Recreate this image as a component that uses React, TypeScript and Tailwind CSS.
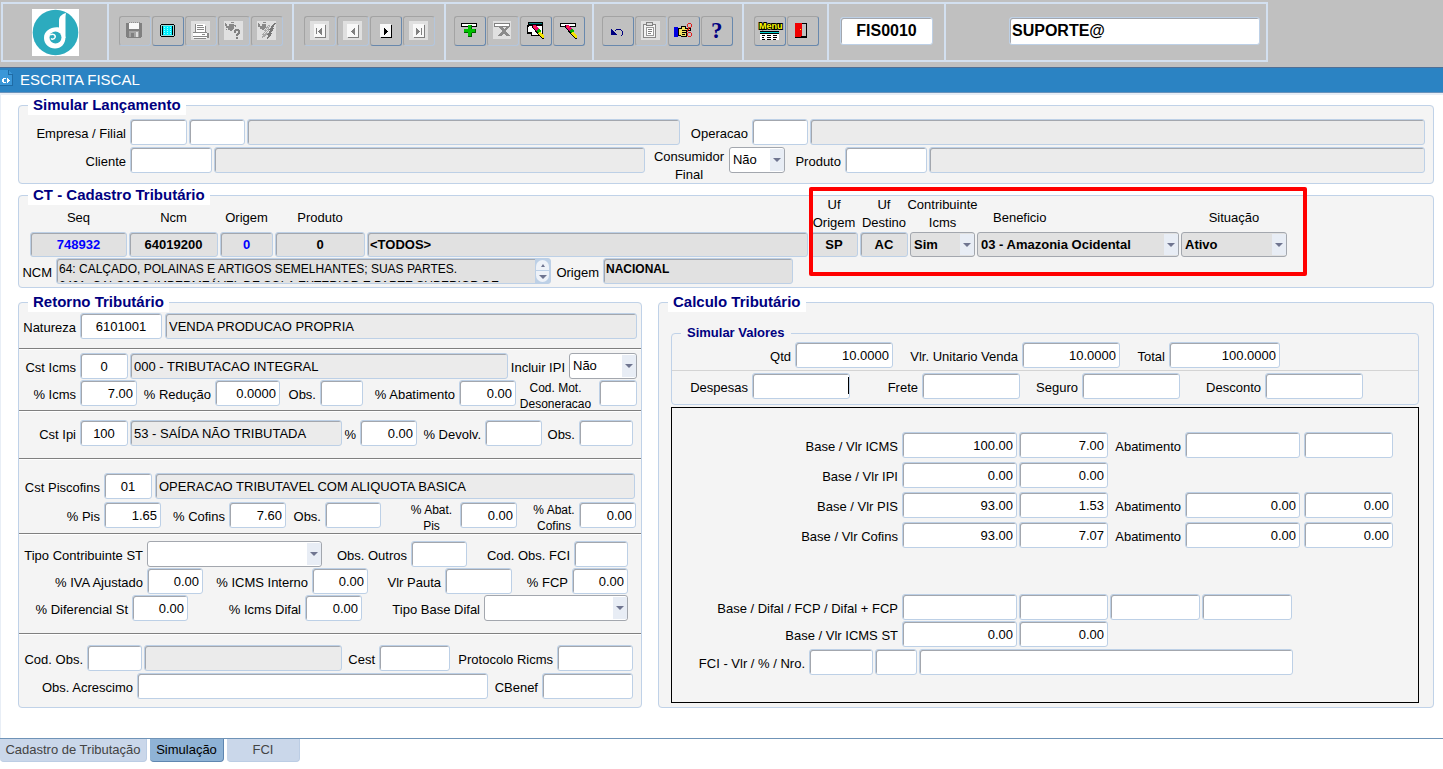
import { useId, useState } from "react";
import type { ReactNode } from "react";
import clsx from "clsx";

const BOX =
  "block h-[26px] rounded-[3px] border border-[#bdd0e6] px-[3px] text-[13px] text-black shadow-[inset_1px_1px_0_#a3a7ae] outline-none";

interface InputProps {
  className?: string;
  value?: string;
  readOnly?: boolean;
  id?: string;
  label?: string;
}

function Input({ className, value = "", readOnly, id, label }: InputProps) {
  return (
    <input
      id={id}
      type="text"
      aria-label={label}
      defaultValue={value}
      readOnly={readOnly}
      className={clsx(BOX, readOnly ? "min-w-0 bg-[#ebebeb]" : "shrink-0 bg-white", className)}
    />
  );
}

interface LabelProps {
  htmlFor: string;
  className: string;
  children: ReactNode;
}

function Label({ htmlFor, className, children }: LabelProps) {
  return (
    <label
      htmlFor={htmlFor}
      className={clsx("h-[26px] shrink-0 pt-[3px] pr-1 text-right leading-6 whitespace-nowrap", className)}
    >
      {children}
    </label>
  );
}

interface FieldProps {
  label: ReactNode;
  labelClass: string;
  className: string;
  value?: string;
}

// Rótulo + campo lado a lado
function Field({ label, labelClass, className, value }: FieldProps) {
  const id = useId();
  return (
    <>
      <Label htmlFor={id} className={labelClass}>
        {label}
      </Label>
      <Input id={id} className={className} value={value} />
    </>
  );
}

interface SelectBoxProps {
  id: string;
  className: string;
  options: string[];
  dark?: boolean;
}

function SelectBox({ id, className, options, dark }: SelectBoxProps) {
  return (
    <div className={clsx("relative self-start", className)}>
      <select
        id={id}
        className={clsx(
          "block w-full appearance-none rounded-[3px] border border-[#a3a7ae] pl-[3px] text-[13px] text-black outline-none",
          dark ? "h-[25px] bg-[#e1e1e1] font-bold" : "h-[26px] bg-white"
        )}
      >
        {options.map((o) => (
          <option key={o}>{o}</option>
        ))}
      </select>
      <span className="pointer-events-none absolute inset-y-[2px] right-px flex w-[14px] items-center justify-center bg-[#e8edf5]">
        <svg width="8" height="4" viewBox="0 0 8 4">
          <path d="M0 0h8L4 4z" fill="#6f7590" />
        </svg>
      </span>
    </div>
  );
}

function SelectField({
  label,
  labelClass,
  className,
  options,
}: {
  label: ReactNode;
  labelClass: string;
  className: string;
  options: string[];
}) {
  const id = useId();
  return (
    <>
      <Label htmlFor={id} className={labelClass}>
        {label}
      </Label>
      <SelectBox id={id} className={className} options={options} />
    </>
  );
}

function Panel({ title, className, children }: { title: string; className?: string; children: ReactNode }) {
  return (
    <fieldset className={clsx("relative min-w-0 rounded-[4px] border border-[#c0d2e8] bg-[#f4f4f4]", className)}>
      <legend className="ml-[9px] bg-white px-[5px] text-[15px] leading-5 font-bold text-[#000080]">{title}</legend>
      {children}
    </fieldset>
  );
}

function Section({ className, children }: { className: string; children: ReactNode }) {
  return (
    <div className={clsx("border-b border-[#808080] shadow-[0_1px_0_#fff]", className)}>{children}</div>
  );
}

function Row({ className, children }: { className?: string; children: ReactNode }) {
  return <div className={clsx("flex", className)}>{children}</div>;
}

// Barra de ferramentas

function Icon({ children }: { children: ReactNode }) {
  return (
    <svg width="20" height="20" viewBox="0 0 20 20" shapeRendering="crispEdges" className="overflow-visible">
      {children}
    </svg>
  );
}

function SaveIcon() {
  return (
    <Icon>
      <path d="M1 2h16v14h-1v1H2v-1H1z" fill="#808080" />
      <path d="M4 2h10v6H4z" fill="#f8f8f8" />
      <path d="M4 1h1v1H4zM6 1h1v1H6zM8 1h1v1H8zM10 1h1v1h-1zM12 1h1v1h-1zM14 1h1v1h-1z" fill="#909090" />
      <path d="M4 10h10v6H4z" fill="#a4a4a4" />
      <path d="M6 12h3v4H6z" fill="#808080" />
      <path d="M11 11h2v5h-2z" fill="#dcdcdc" />
    </Icon>
  );
}

function ScreenIcon() {
  return (
    <Icon>
      <path d="M3 3h13v1h1v11h-1v1H3v-1H2V4h1z" fill="#000" />
      <path d="M3 4h13v11H3z" fill="#9adada" />
      <path d="M4 5h11v9H4z" fill="#000" />
      <path d="M5 5h9v9H5z" fill="#00f0ff" />
      {[6, 8, 10, 12].map((y) => (
        <path key={y} d={`M6 ${y}h1v1H6zM9 ${y}h1v1H9zM12 ${y}h1v1h-1z`} fill="#a0ffff" />
      ))}
    </Icon>
  );
}

function PrintIcon() {
  return (
    <Icon>
      <path d="M0 0h19v19H0z" fill="#e0e0e0" />
      <path d="M5 3h9v9H5z" fill="#fff" />
      <path d="M4 3h1v9H4zM6 4h6v1H6zM6 6h7v1H6zM6 8h7v1H6zM14 5h1v6h-1z" fill="#888" />
      <path d="M2 12h15v5H2z" fill="#fff" />
      <path d="M2 11h14v1H2zM2 15h15v1H2zM3 17h12v1H3zM16 12h2v5h-2zM11 13h3v1h-3z" fill="#888" />
    </Icon>
  );
}

function QueryIcon() {
  return (
    <Icon>
      <path d="M0 0h19v19H0z" fill="#e0e0e0" />
      <path d="M1 2h1v1h1v2h2V3h5v1h2v2h-1V5h-1v3H9v1H8v1H6V9H4V7H2V5H1z" fill="#888" />
      <path d="M7 1h3v1H7zM2 8h1v1H2z" fill="#888" />
      <path d="M10 9h1V8h4v1h1v4h-1v1h-1v1h-2v-2h1v-1h1v-2h-2v2h-2zM12 16h2v2h-2z" fill="#808080" />
    </Icon>
  );
}

function RunQueryIcon() {
  return (
    <Icon>
      <path d="M0 0h19v19H0z" fill="#e0e0e0" />
      <path d="M1 2h1v1h1v2h2V3h4v4H8v1H7v1H5V8H3V6H1zM6 1h3v1H6z" fill="#888" />
      <path d="M12 4L8 9h2l-4 4h2l-3 4M12 4h1l-2 4h2l-4 4h2l-6 5" fill="none" stroke="#a8a8a8" />
      <path d="M18 2l-5 6h2l-4 5h2l-3 5M18 2v1l-3 4h2l-4 5h2l-5 6" fill="none" stroke="#777" />
    </Icon>
  );
}

function NavIcon({ glyph, active }: { glyph: string; active?: boolean }) {
  return (
    <Icon>
      {!active && <path d="M0 0h19v19H0z" fill="#e0e0e0" />}
      <path d="M5 4h11v13H5z" fill={active ? "#000" : "#808080"} />
      <path d="M4 3h11v13H4z" fill="#f8f8f8" />
      <path d={glyph} fill={active ? "#000" : "#808080"} />
    </Icon>
  );
}

function AddIcon() {
  return (
    <Icon>
      <path d="M1 2h16v4H1z" fill="#000" />
      <path d="M2 3h14v2H2z" fill="#fff" />
      <path d="M8 4h4v4h4v4h-4v4H8v-4H4V8h4z" fill="#00c000" />
      <path d="M11 4h1v4h-1zM15 8h1v4h-4v-1h3zM4 11h4v1H4zM11 12h1v4H8v-1h3z" fill="#006000" />
    </Icon>
  );
}

function RemoveIcon() {
  return (
    <Icon>
      <path d="M0 0h18v18H0z" fill="#e0e0e0" />
      <path d="M1 2h16v4H1z" fill="#808080" />
      <path d="M2 3h14v2H2z" fill="#fff" />
      <path d="M5 5h3l3 3 3-3h3l-4 5 4 5h-4l-2-3-3 3H4l5-5z" fill="#8a8a8a" />
    </Icon>
  );
}

function Marker() {
  return (
    <>
      <path d="M6 4h3l2 2 7 9v3h-2L9 10 6 6z" fill="#000" />
      <path d="M7 4h2l4 4-3 2-3-4z" fill="#e8006c" />
      <path d="M8 5h2v2H8z" fill="#ff3030" />
      <path d="M10 10l3-3 2 3-2 2z" fill="#00b000" />
      <path d="M12 12l2-2 4 5v2h-2z" fill="#f4e400" />
    </>
  );
}

function ClearBlockIcon() {
  return (
    <Icon>
      <path d="M2 1h15v14H5v-2H1V4h1z" fill="#000" />
      <path d="M3 2h13v1H3z" fill="#008080" />
      <path d="M3 5h13v9H6v-3H2V6h1z" fill="#fff" />
      <Marker />
    </Icon>
  );
}

function ClearRecordIcon() {
  return (
    <Icon>
      <path d="M1 2h16v4H1z" fill="#000" />
      <path d="M2 3h14v2H2z" fill="#fff" />
      <Marker />
    </Icon>
  );
}

function UndoIcon() {
  return (
    <Icon>
      <path d="M3 8v6h6v-1H8v-1H7v-1H6v-1H5V9H4V8z" fill="#000080" />
      <path d="M7 9h1V8h5v1h1v1h1v4h-1v1h-1v-1h1v-4h-1V9H8v1H7z" fill="#000080" />
    </Icon>
  );
}

function ClipboardIcon() {
  return (
    <Icon>
      <path d="M0 0h19v19H0z" fill="#e0e0e0" />
      <path d="M2 3h12v13H2z" fill="#f4f4f4" stroke="#888" />
      <path d="M5 1h6v3H5z" fill="#ddd" stroke="#808080" />
      <path d="M5 6h7v8H5z" fill="#fff" stroke="#999" />
      <path d="M7 8h4v1H7zM7 10h4v1H7zM7 12h3v1H7z" fill="#808080" />
    </Icon>
  );
}

function HandCutIcon() {
  return (
    <Icon>
      <path d="M0 6h4v10H0z" fill="#0000e0" />
      <path d="M4 7h3V5h4v2h5v2h-4v6H7l-3-1z" fill="#f0e060" stroke="#000" />
      <path d="M8 9h4M8 11h4M8 13h3" stroke="#000" />
      <path d="M13 10l2-3M13 10l2 2" stroke="#e02020" />
      <circle cx="15.5" cy="4.5" r="2" fill="none" stroke="#e02020" />
      <circle cx="15.5" cy="13.5" r="2" fill="none" stroke="#e02020" />
    </Icon>
  );
}

function HelpIcon() {
  return (
    <Icon>
      <text x="4" y="17" fontFamily="Liberation Serif, serif" fontSize="23" fontWeight="bold" fill="#000080">
        ?
      </text>
    </Icon>
  );
}

function MenuIcon() {
  return (
    <Icon>
      <text
        x="-1"
        y="8"
        fontFamily="Liberation Sans, sans-serif"
        fontSize="9"
        fontWeight="bold"
        fill="#ffff00"
        stroke="#000"
        strokeWidth="2"
        paintOrder="stroke"
      >
        Menu
      </text>
      <path d="M0 10h19v9H0z" fill="#fff" />
      <path d="M0 10h19v1H0zM0 12h19v1H0z" fill="#000" />
      <path d="M0 11h19v1H0z" fill="#00d0d0" />
      <path d="M2 14h3v1H2zM7 14h4v1H7zM13 14h4v1h-4zM2 16h2v1H2zM7 16h4v1H7zM13 16h4v1h-4zM2 18h3v1H2zM7 18h4v1H7zM13 18h3v1h-3z" fill="#000" />
    </Icon>
  );
}

function ExitIcon() {
  return (
    <Icon>
      <path d="M2 2h12v15H2z" fill="#000" />
      <path d="M9 3h4v12H9z" fill="#c0c0c0" />
      <path d="M2 2h7v12l-2 2H2z" fill="#f00000" />
      <path d="M7 8h1v1H7z" fill="#ffff00" />
    </Icon>
  );
}

interface Tool {
  name: string;
  icon: ReactNode;
  disabled?: boolean;
}

const toolGroups: Tool[][] = [
  [
    { name: "Salvar", icon: <SaveIcon />, disabled: true },
    { name: "Tela", icon: <ScreenIcon /> },
    { name: "Imprimir", icon: <PrintIcon />, disabled: true },
    { name: "Consultar", icon: <QueryIcon />, disabled: true },
    { name: "Executar consulta", icon: <RunQueryIcon />, disabled: true },
  ],
  [
    { name: "Primeiro", icon: <NavIcon glyph="M6 7h1v6H6zM12 7v7h-1v-1h-1v-1H9v-1H8v-1h1V9h1V8h1V7z" />, disabled: true },
    { name: "Anterior", icon: <NavIcon glyph="M12 7v7h-1v-1h-1v-1H9v-1H8v-1h1V9h1V8h1V7z" />, disabled: true },
    { name: "Próximo", icon: <NavIcon glyph="M8 7v7h1v-1h1v-1h1v-1h1v-1h-1V9h-1V8H9V7z" active /> },
    { name: "Último", icon: <NavIcon glyph="M7 7v7h1v-1h1v-1h1v-1h1v-1h-1V9H9V8H8V7zM12 7h1v7h-1z" />, disabled: true },
  ],
  [
    { name: "Inserir", icon: <AddIcon /> },
    { name: "Excluir", icon: <RemoveIcon />, disabled: true },
    { name: "Limpar bloco", icon: <ClearBlockIcon /> },
    { name: "Limpar registro", icon: <ClearRecordIcon /> },
  ],
  [
    { name: "Desfazer", icon: <UndoIcon /> },
    { name: "Colar", icon: <ClipboardIcon />, disabled: true },
    { name: "Recortar", icon: <HandCutIcon /> },
    { name: "Ajuda", icon: <HelpIcon /> },
  ],
  [
    { name: "Menu", icon: <MenuIcon /> },
    { name: "Sair", icon: <ExitIcon /> },
  ],
];

const groupSizes = [
  "w-[185px] pl-[10px]",
  "w-[152px] pl-[10px]",
  "w-[148px] pl-2",
  "w-[150px] pl-2",
  "w-[85px] pl-[10px]",
];

const CELL = "flex shrink-0 items-start border-r-2 border-[#d3e0f0]";

function Toolbar() {
  return (
    <header className="bg-[#c0c0c0] pt-[2px] pb-[5px] pl-px">
      <div className="flex h-[60px] w-max border-2 border-[#d3e0f0]">
        <div className={clsx(CELL, "w-[106px] justify-center pt-[5px]")}>
          <svg width="47" height="47" viewBox="0 0 47 47" className="bg-white">
            <circle cx="23.5" cy="23.5" r="22.8" fill="#2cabbe" />
            <path d="M34 4C29 5.500 27 8 27 12v16l6.500 1V10c0-2 0-4 .5-6z" fill="#fff" />
            <path d="M27 18.500C19 17.500 12 22 12 29c0 6 5 10.500 11 10.500S33.500 35 33.500 28l-6-8z" fill="#fff" />
            <circle cx="23.500" cy="28.500" r="6" fill="#2cabbe" />
            <path d="M18 26c3-2 6 0 5 2.500-1 2-3 2-4 1" fill="none" stroke="#fff" strokeWidth="1.500" />
          </svg>
        </div>
        {toolGroups.map((group, i) => (
          <div key={i} className={clsx(CELL, "gap-px pt-3", groupSizes[i])}>
            {group.map((tool) => (
              <button
                key={tool.name}
                type="button"
                aria-label={tool.name}
                disabled={tool.disabled}
                className={clsx(
                  "flex h-[30px] w-8 items-center justify-center rounded-[3px] border border-t-[#a3a3a3] border-l-[#a3a3a3]",
                  tool.disabled ? "border-r-[#b4c6dc] border-b-[#b4c6dc]" : "border-r-[#6888ad] border-b-[#6888ad]"
                )}
              >
                {tool.icon}
              </button>
            ))}
          </div>
        ))}
        <div className={clsx(CELL, "w-[117px] justify-center pt-[13px]")}>
          <input
            type="text"
            aria-label="Programa"
            defaultValue="FIS0010"
            className="h-7 w-[93px] rounded-[3px] border border-[#bdd0e6] bg-white text-center text-[16px] font-bold shadow-[inset_1px_1px_0_#a3a7ae]"
          />
        </div>
        <div className="flex w-[320px] items-start justify-end pt-[13px] pr-[6px]">
          <input
            type="text"
            aria-label="Usuário"
            defaultValue="SUPORTE@"
            className="h-7 w-[251px] rounded-[3px] border border-[#bdd0e6] bg-white px-[2px] text-[16px] font-bold shadow-[inset_1px_1px_0_#a3a7ae]"
          />
        </div>
      </div>
    </header>
  );
}

function TitleBar() {
  return (
    <div className="flex h-[26px] items-center gap-[7px] border-t border-b border-t-[#4f6f96] border-b-[#6a93bb] bg-[#2b83c3] text-white">
      <svg width="13" height="16" viewBox="0 0 13 16" shapeRendering="crispEdges" className="mb-1">
        <path d="M0 0h8l5 4v12H0z" fill="#3b97d8" />
        <path d="M8 0v4h4M12 4v11H0" fill="none" stroke="#1f6ba5" />
        <path d="M3 8h3v1H4v3h2v1H3v-1H2V9h1zM7 8h1v1h1v1h1v1H9v1H8v1H7z" fill="#fff" />
      </svg>
      <h1 className="text-[15px]">ESCRITA FISCAL</h1>
    </div>
  );
}

function SimularLancamento() {
  return (
    <Panel title="Simular Lançamento">
      <div className="flex flex-col gap-[2px] pt-[4px] pr-2">
        <Row>
          <Field label="Empresa / Filial" labelClass="w-[111px]" className="w-[57px]" />
          <Input className="mx-[2px] w-[56px]" label="Filial" />
          <Input className="w-0 flex-[7]" label="Nome da empresa" readOnly />
          <Field label="Operacao" labelClass="w-[72px]" className="w-[56px]" />
          <Input className="ml-[2px] w-0 flex-[10]" label="Descrição da operação" readOnly />
        </Row>
        <Row className="h-9">
          <Field label="Cliente" labelClass="w-[111px]" className="w-[82px]" />
          <Input className="ml-[2px] w-0 flex-[13]" label="Nome do cliente" readOnly />
          <SelectField
            label={
              <span className="-mt-[2px] block text-center leading-[18px]">
                Consumidor
                <br />
                Final
              </span>
            }
            labelClass="w-[84px] pl-2"
            className="w-[56px]"
            options={["Não", "Sim"]}
          />
          <Field label="Produto" labelClass="w-[60px]" className="w-[82px]" />
          <Input className="ml-[2px] w-0 flex-[15]" label="Descrição do produto" readOnly />
        </Row>
      </div>
    </Panel>
  );
}

interface ColumnProps {
  label: ReactNode;
  className: string;
  labelClass?: string;
  value?: string;
  inputClass?: string;
  options?: string[];
}

// Coluna do cadastro: cabeçalho acima do campo
function Column({ label, className, labelClass = "justify-center pb-[5px]", value, inputClass, options }: ColumnProps) {
  const id = useId();
  return (
    <div className={className}>
      <label htmlFor={id} className={clsx("flex h-9 items-end text-center leading-[18px] whitespace-nowrap", labelClass)}>
        <span>{label}</span>
      </label>
      {options ? (
        <SelectBox id={id} className="w-full" options={options} dark />
      ) : (
        <input
          id={id}
          type="text"
          readOnly
          value={value}
          className={clsx(
            "block h-[25px] w-full rounded-[3px] border border-[#bdd0e6] bg-[#e1e1e1] px-[2px] text-[13px] font-bold shadow-[inset_1px_1px_0_#a3a7ae] outline-none",
            inputClass
          )}
        />
      )}
    </div>
  );
}

const ncmText =
  "64: CALÇADO, POLAINAS E ARTIGOS SEMELHANTES; SUAS PARTES.\n6401: CALÇADO IMPERMEÁVEL DE SOLA EXTERIOR E PARTE SUPERIOR DE";

function CadastroTributario() {
  const ncmId = useId();
  const origemId = useId();
  return (
    <Panel title="CT - Cadastro Tributário" className="mt-px">
      <div className="-mt-[9px] flex gap-[2px] pr-[146px] pl-[11px]">
        <Column label="Seq" className="w-[97px]" value="748932" inputClass="text-center text-[#0000ff]" />
        <Column label="Ncm" className="w-[89px]" value="64019200" inputClass="text-center" />
        <Column label="Origem" className="w-[53px]" value="0" inputClass="text-center text-[#0000ff]" />
        <Column label="Produto" className="w-[90px]" value="0" inputClass="text-center" />
        <Column label="" className="flex-1" value="<TODOS>" />
        <Column
          label={<>Uf<br />Origem</>}
          className="w-[48px]"
          labelClass="justify-center"
          value="SP"
          inputClass="text-center"
        />
        <Column
          label={<>Uf<br />Destino</>}
          className="w-[48px]"
          labelClass="justify-center"
          value="AC"
          inputClass="text-center"
        />
        <Column
          label={<>Contribuinte<br />Icms</>}
          className="w-[65px]"
          labelClass="justify-center"
          options={["Sim", "Não"]}
        />
        <Column label="Beneficio" className="w-[202px]" labelClass="pb-[5px] pl-4" options={["03 - Amazonia Ocidental"]} />
        <Column label="Situação" className="w-[106px]" options={["Ativo", "Inativo"]} />
      </div>
      <Row className="mt-px pb-[3px]">
        <Label htmlFor={ncmId} className="w-[37px]">
          NCM
        </Label>
        <div className="flex h-[26px] w-[495px] rounded-[3px] border border-[#bdd0e6] bg-[#e1e1e1] shadow-[inset_1px_1px_0_#a3a7ae]">
          <textarea
            id={ncmId}
            readOnly
            value={ncmText}
            className="h-[23px] flex-1 resize-none overflow-hidden px-[2px] pt-[2px] text-[12px] leading-[17px] whitespace-pre outline-none"
          />
          <span className="flex w-[15px] flex-col justify-center gap-px bg-[#bdd0e6] px-px">
            <button type="button" aria-label="Subir" className="flex h-[10px] items-center justify-center rounded-t-full bg-[#eef2f8]">
              <svg width="4" height="3" viewBox="0 0 4 3">
                <path d="M0 3h4L2 0z" fill="#6f7590" />
              </svg>
            </button>
            <button type="button" aria-label="Descer" className="flex h-[11px] items-center justify-center rounded-b-full bg-[#eef2f8]">
              <svg width="8" height="4" viewBox="0 0 8 4">
                <path d="M0 0h8L4 4z" fill="#6f7590" />
              </svg>
            </button>
          </span>
        </div>
        <Label htmlFor={origemId} className="w-[52px]">
          Origem
        </Label>
        <input
          id={origemId}
          type="text"
          readOnly
          value="NACIONAL"
          className="h-[26px] w-[190px] rounded-[3px] border border-[#bdd0e6] bg-[#e1e1e1] px-[2px] pb-1 text-[12px] font-bold shadow-[inset_1px_1px_0_#a3a7ae] outline-none"
        />
      </Row>
      {/* Destaque dos filtros */}
      <div className="pointer-events-none absolute -top-[18px] right-[126px] h-[89px] w-[498px] rounded-[2px] border-4 border-[#ff0000]" />
    </Panel>
  );
}

function TwoLines({ first, second }: { first: string; second: string }) {
  return (
    <span className="-mt-[3px] block text-center text-[12px] leading-4">
      {first}
      <br />
      {second}
    </span>
  );
}

function RetornoTributario() {
  return (
    <Panel title="Retorno Tributário">
      <Section className="pt-px pr-1 pb-[9px]">
        <Row>
          <Field label="Natureza" labelClass="w-[61px]" className="w-[82px] text-center" value="6101001" />
          <Input className="ml-[3px] flex-1" label="Descrição da natureza" value="VENDA PRODUCAO PROPRIA" readOnly />
        </Row>
      </Section>
      <Section className="flex flex-col gap-px pt-1 pr-1 pb-1">
        <Row>
          <Field label="Cst Icms" labelClass="w-[61px]" className="w-[48px] text-center" value="0" />
          <Input className="ml-[2px] flex-1" label="Descrição Cst Icms" value="000 - TRIBUTACAO INTEGRAL" readOnly />
          <SelectField label="Incluir IPI" labelClass="w-[61px]" className="w-[68px]" options={["Não", "Sim"]} />
        </Row>
        <Row>
          <Field label="% Icms" labelClass="w-[61px]" className="w-[57px] text-right" value="7.00" />
          <Field label="% Redução" labelClass="w-[78px]" className="w-[65px] text-right" value="0.0000" />
          <Field label="Obs." labelClass="w-[40px]" className="w-[43px]" />
          <Field label="% Abatimento" labelClass="w-[96px]" className="w-[57px] text-right" value="0.00" />
          <Field label={<TwoLines first="Cod. Mot." second="Desoneracao" />} labelClass="w-[83px]" className="w-[38px]" />
        </Row>
      </Section>
      <Section className="pt-[9px] pr-2 pb-3">
        <Row>
          <Field label="Cst Ipi" labelClass="w-[61px]" className="w-[48px] text-center" value="100" />
          <Input className="ml-[2px] flex-1" label="Descrição Cst Ipi" value="53 - SAÍDA NÃO TRIBUTADA" readOnly />
          <Field label="%" labelClass="w-[18px]" className="w-[57px] text-right" value="0.00" />
          <Field label="% Devolv." labelClass="w-[68px]" className="w-[57px]" />
          <Field label="Obs." labelClass="w-[37px]" className="w-[54px]" />
        </Row>
      </Section>
      <Section className="flex flex-col gap-[3px] pt-[14px] pr-[6px] pb-[5px]">
        <Row>
          <Field label="Cst Piscofins" labelClass="w-[85px]" className="w-[48px] text-center" value="01" />
          <Input
            className="ml-[3px] flex-1"
            label="Descrição Cst Piscofins"
            value="OPERACAO TRIBUTAVEL COM ALIQUOTA BASICA"
            readOnly
          />
        </Row>
        <Row>
          <Field label="% Pis" labelClass="w-[85px]" className="w-[57px] text-right" value="1.65" />
          <Field label="% Cofins" labelClass="w-[68px]" className="w-[57px] text-right" value="7.60" />
          <Field label="Obs." labelClass="w-[39px]" className="w-[56px]" />
          <Field
            label={<TwoLines first="% Abat." second="Pis" />}
            labelClass="w-[79px] pl-[26px]"
            className="w-[57px] text-right"
            value="0.00"
          />
          <Field
            label={<TwoLines first="% Abat." second="Cofins" />}
            labelClass="w-[62px] pl-4"
            className="w-[57px] text-right"
            value="0.00"
          />
        </Row>
      </Section>
      <Section className="flex flex-col gap-px pt-[7px] pb-3">
        <Row>
          <SelectField label="Tipo Contribuinte ST" labelClass="w-[128px]" className="w-[175px]" options={[""]} />
          <Field label="Obs. Outros" labelClass="w-[89px]" className="w-[56px]" />
          <Field label="Cod. Obs. FCI" labelClass="w-[107px]" className="w-[54px]" />
        </Row>
        <Row>
          <Field label="% IVA Ajustado" labelClass="w-[128px]" className="w-[56px] text-right" value="0.00" />
          <Field label="% ICMS Interno" labelClass="w-[109px]" className="w-[56px] text-right" value="0.00" />
          <Field label="Vlr Pauta" labelClass="w-[77px]" className="w-[67px]" />
          <Field label="% FCP" labelClass="w-[60px]" className="w-[56px] text-right" value="0.00" />
        </Row>
        <Row>
          <Field label="% Diferencial St" labelClass="w-[113px]" className="w-[56px] text-right" value="0.00" />
          <Field label="% Icms Difal" labelClass="w-[117px]" className="w-[57px] text-right" value="0.00" />
          <SelectField label="Tipo Base Difal" labelClass="w-[122px]" className="w-[144px]" options={[""]} />
        </Row>
      </Section>
      <div className="flex flex-col gap-[2px] pt-[11px] pr-2 pb-2">
        <Row>
          <Field label="Cod. Obs." labelClass="w-[68px]" className="w-[55px]" />
          <Input className="ml-[2px] flex-1" label="Descrição da observação" readOnly />
          <Field label="Cest" labelClass="w-[37px]" className="w-[71px]" />
          <Field label="Protocolo Ricms" labelClass="w-[107px]" className="w-[76px]" />
        </Row>
        <Row>
          <Field label="Obs. Acrescimo" labelClass="w-[118px]" className="min-w-0 flex-1" />
          <Field label="CBenef" labelClass="w-[54px]" className="w-[91px]" />
        </Row>
      </div>
    </Panel>
  );
}

interface BaseRow {
  label: string;
  base: string;
  valor: string;
  abatimento?: [string, string];
}

const baseRows: BaseRow[] = [
  { label: "Base / Vlr ICMS", base: "100.00", valor: "7.00", abatimento: ["", ""] },
  { label: "Base / Vlr IPI", base: "0.00", valor: "0.00" },
  { label: "Base / Vlr PIS", base: "93.00", valor: "1.53", abatimento: ["0.00", "0.00"] },
  { label: "Base / Vlr Cofins", base: "93.00", valor: "7.07", abatimento: ["0.00", "0.00"] },
];

function CalculoTributario() {
  return (
    <Panel title="Calculo Tributário">
      <fieldset className="mt-[12px] mr-[14px] ml-3 min-w-0 rounded-[4px] border border-[#c0d2e8] pb-[5px]">
        <legend className="ml-[9px] px-[6px] text-[13px] leading-[18px] font-bold text-[#000080]">Simular Valores</legend>
        <Row>
          <Field label="Qtd" labelClass="w-[123px]" className="w-[98px] text-right" value="10.0000" />
          <Field label="Vlr. Unitario Venda" labelClass="w-[129px]" className="w-[98px] text-right" value="10.0000" />
          <Field label="Total" labelClass="w-[49px]" className="w-[111px] text-right" value="100.0000" />
        </Row>
        <hr className="mt-[2px] mb-[2px] border-[#d4d4d4]" />
        <Row>
          <div className="relative flex">
            <Field label="Despesas" labelClass="w-[80px]" className="w-[98px] text-right" />
            <span className="absolute top-1 right-px h-[17px] w-px bg-black" />
          </div>
          <Field label="Frete" labelClass="w-[72px]" className="w-[98px] text-right" />
          <Field label="Seguro" labelClass="w-[62px]" className="w-[98px] text-right" />
          <Field label="Desconto" labelClass="w-[85px]" className="w-[98px] text-right" />
        </Row>
      </fieldset>
      <div className="mt-[2px] mr-[14px] ml-3 border border-black pt-6 pb-[27px]">
        <div className="flex flex-col gap-1">
          {baseRows.map((r) => (
            <Row key={r.label}>
              <Field label={r.label} labelClass="w-[230px]" className="w-[115px] text-right" value={r.base} />
              <Input className="ml-[2px] w-[89px] text-right" label={`${r.label} valor`} value={r.valor} />
              {r.abatimento && (
                <>
                  <Field label="Abatimento" labelClass="w-[77px]" className="w-[115px] text-right" value={r.abatimento[0]} />
                  <Input className="ml-1 w-[89px] text-right" label="Valor abatimento" value={r.abatimento[1]} />
                </>
              )}
            </Row>
          ))}
        </div>
        <div className="mt-[46px] flex flex-col gap-px">
          <Row className="gap-[2px]">
            <Field label="Base / Difal / FCP / Difal + FCP" labelClass="-mr-[2px] w-[230px]" className="w-[115px]" />
            <Input className="w-[89px]" label="Difal" />
            <Input className="w-[90px]" label="FCP" />
            <Input className="w-[90px]" label="Difal + FCP" />
          </Row>
          <Row>
            <Field label="Base / Vlr ICMS ST" labelClass="w-[230px]" className="w-[115px] text-right" value="0.00" />
            <Input className="ml-[2px] w-[89px] text-right" label="Vlr ICMS ST" value="0.00" />
          </Row>
          <Row className="mt-px gap-[2px]">
            <Field label="FCI - Vlr / % / Nro." labelClass="-mr-[2px] w-[137px]" className="w-[64px]" />
            <Input className="w-[42px]" label="FCI %" />
            <Input className="w-[374px]" label="FCI Nro." />
          </Row>
        </div>
      </div>
    </Panel>
  );
}

const tabs = [
  { name: "Cadastro de Tributação", width: "w-[147px]" },
  { name: "Simulação", width: "w-[74px]" },
  { name: "FCI", width: "w-[73px]" },
];

export default function App() {
  const [activeTab, setActiveTab] = useState("Simulação");

  return (
    <div className="min-h-screen bg-white font-['Liberation_Sans',Arial,sans-serif] text-[13px] text-black">
      <Toolbar />
      <TitleBar />
      <main className="border-t-2 border-l border-[#e8eef6] pr-[9px] pb-[30px] pl-[17px]">
        <SimularLancamento />
        <CadastroTributario />
        <div className="mt-1 grid grid-cols-[78fr_97fr] gap-4">
          <RetornoTributario />
          <CalculoTributario />
        </div>
      </main>
      <div role="tablist" className="flex gap-[3px] border-t border-[#6f93b7]">
        {tabs.map((tab) => (
          <button
            key={tab.name}
            type="button"
            role="tab"
            aria-selected={tab.name === activeTab}
            onClick={() => setActiveTab(tab.name)}
            className={clsx(
              "h-[23px] rounded-b-[4px] border-r border-b text-[13px]",
              tab.width,
              tab.name === activeTab
                ? "border-[#5f86b0] bg-[#8fb3d6] text-black"
                : "border-[#bccde4] bg-[#cad7ea] text-[#444]"
            )}
          >
            {tab.name}
          </button>
        ))}
      </div>
    </div>
  );
}
